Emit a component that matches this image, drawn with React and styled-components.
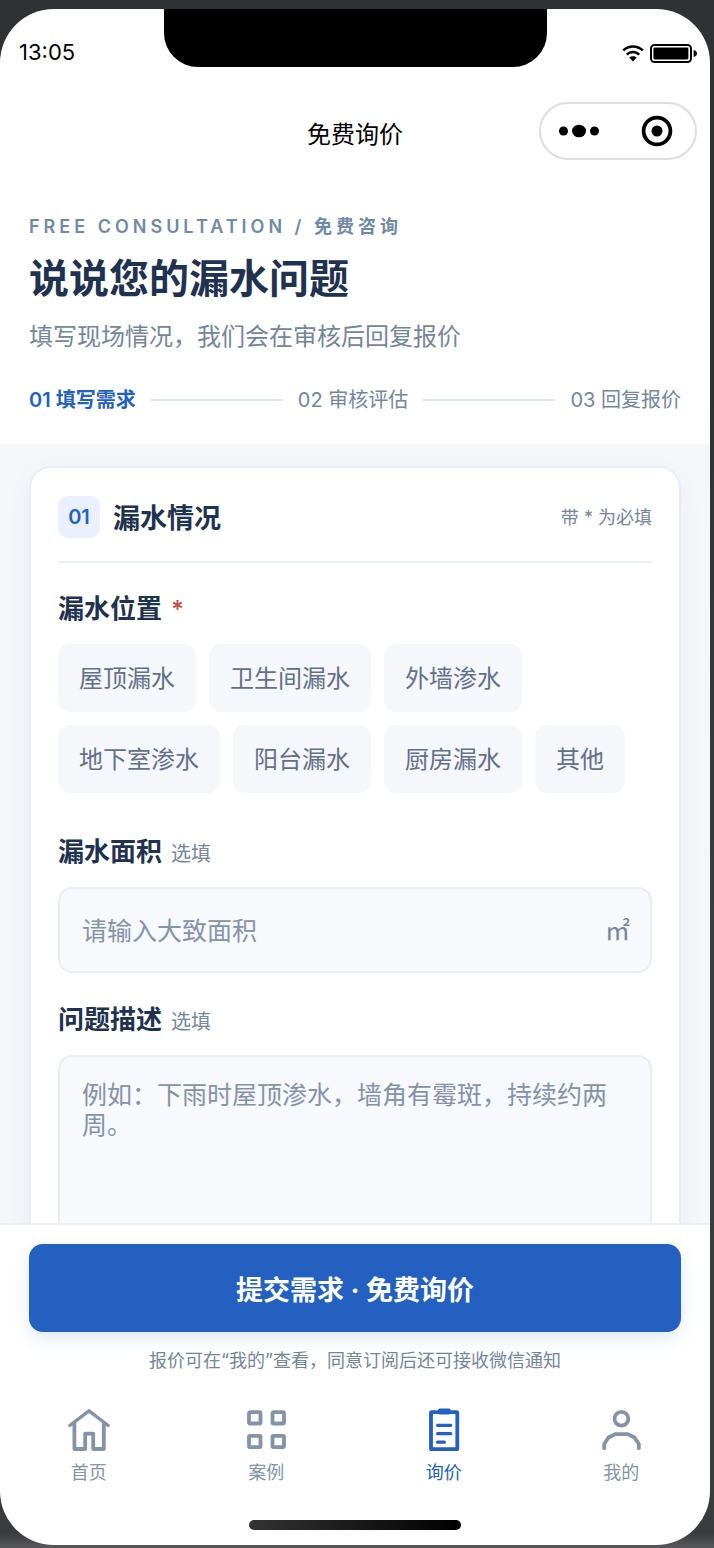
import React, { useState } from 'react'
import styled, { createGlobalStyle } from 'styled-components'

const GlobalStyle = createGlobalStyle`
  *, *::before, *::after {
    box-sizing: border-box;
  }

  body {
    margin: 0;
    background: #303133;
    font-family: Inter, "Noto Sans CJK SC", sans-serif;
    color: #1f324f;
  }

  button, input, textarea {
    font-family: inherit;
  }
`

const Desk = styled.div`
  display: flex;
  height: 100vh;
  padding: 9px 4px 3px 0;
  background: linear-gradient(#303133 0, #303133 20%, #3a3b3d 60%, #3a3b3d 99%, #58585a 100%);
`

const Phone = styled.div`
  flex: 1;
  min-width: 0;
  display: flex;
  flex-direction: column;
  overflow: hidden;
  border-radius: 54px;
  background: #fff;
`

const StatusBar = styled.div`
  flex: none;
  display: grid;
  grid-template-columns: 1fr 383px 1fr;
  height: 58px;
  color: #000;
`

const Clock = styled.time`
  padding: 29px 0 0 19px;
  font-size: 22px;
  line-height: 28px;
`

const Notch = styled.div`
  border-radius: 0 0 34px 34px;
  background: #000;
`

const StatusIcons = styled.div`
  display: flex;
  justify-content: flex-end;
  align-items: flex-start;
  gap: 6px;
  padding: 35px 12px 0 0;
`

const NavBar = styled.header`
  flex: none;
  display: grid;
  grid-template-columns: 1fr auto 1fr;
  align-items: center;
  height: 109px;
  padding: 0 13px;
  color: #000;
`

const NavTitle = styled.div`
  grid-column: 2;
  padding-top: 26px;
  font-size: 24px;
  line-height: 32px;
`

const Capsule = styled.div`
  justify-self: end;
  display: flex;
  width: 158px;
  height: 58px;
  margin-top: 19px;
  border: 2px solid #dedede;
  border-radius: 29px;
`

const CapsuleButton = styled.button`
  flex: 1;
  display: flex;
  align-items: center;
  justify-content: center;
  padding: 0;
  border: 0;
  background: none;
  color: #000;
  cursor: pointer;
`

const Hero = styled.section`
  flex: none;
  padding: 39px 29px 30px;
`

const Eyebrow = styled.div`
  font-size: 18px;
  line-height: 24px;
  font-weight: 600;
  letter-spacing: 4px;
  color: #7189a6;
`

const Heading = styled.h1`
  margin: 12px 0 14px;
  font-size: 40px;
  line-height: 56px;
  font-weight: 700;
`

const Lead = styled.p`
  margin: 0 0 33px;
  font-size: 24px;
  line-height: 32px;
  color: #75859b;
`

const Steps = styled.ol`
  display: flex;
  align-items: center;
  gap: 15px;
  margin: 0;
  padding: 0;
  list-style: none;
`

const Step = styled.li`
  display: contents;
  font-size: 20px;
  line-height: 28px;
  font-weight: ${props => props.$active ? '600' : '400'};
  color: ${props => props.$active ? '#2360bf' : '#75859b'};

  &:not(:first-child)::before {
    content: '';
    flex: 1;
    height: 2px;
    background: #dfe6f1;
  }
`

const FormArea = styled.main`
  flex: 1;
  min-height: 0;
  padding: 22px 29px;
  overflow-y: auto;
  scrollbar-width: none;
  background: #f4f6fa;
`

const Card = styled.form`
  padding: 28px 27px;
  border: 2px solid #e8edf5;
  border-radius: 22px;
  background: #fff;
  box-shadow: 0 8px 28px 0 rgba(31, 50, 79, 0.04);
`

const CardHead = styled.div`
  display: flex;
  align-items: center;
  padding-bottom: 23px;
  margin-bottom: 28px;
  border-bottom: 2px solid #ebf0f6;
`

const CardNumber = styled.span`
  width: 42px;
  margin-right: 13px;
  border-radius: 10px;
  background: #eaf0fd;
  font-size: 20px;
  line-height: 42px;
  font-weight: 600;
  text-align: center;
  color: #2360bf;
`

const CardTitle = styled.h2`
  flex: 1;
  margin: 0;
  padding-top: 4px;
  font-size: 27px;
  line-height: 36px;
  font-weight: 600;
`

const CardNote = styled.span`
  padding-top: 2px;
  font-size: 18px;
  line-height: 24px;
  color: #75859b;
`

const Field = styled.div`
  display: flex;
  flex-direction: column;
  gap: 17px;
  margin-bottom: ${props => props.$loose ? '41px' : '29px'};
`

const Label = styled.label`
  display: flex;
  align-items: baseline;
  gap: 9px;
  height: 36px;
  font-size: 26px;
  line-height: 36px;
  font-weight: 600;
`

const Required = styled.span`
  font-size: 24px;
  color: #c0504d;
`

const Optional = styled.span`
  font-size: 20px;
  font-weight: 400;
  color: #75859b;
`

const Chips = styled.div`
  display: flex;
  flex-wrap: wrap;
  gap: 13px;
`

const Chip = styled.button`
  height: 68px;
  padding: 2px 21px 0;
  border: 0;
  border-radius: 12px;
  background: ${props => props.$selected ? '#eaf0fd' : '#f5f7fb'};
  font-size: 24px;
  line-height: 32px;
  color: ${props => props.$selected ? '#2360bf' : '#627089'};
  cursor: pointer;
`

const InputBox = styled.div`
  display: flex;
  align-items: center;
  height: 86px;
  padding: 2px 20px 0 22px;
  border: 2px solid #e8edf5;
  border-radius: 14px;
  background: #f7f9fc;
`

const TextInput = styled.input`
  flex: 1;
  min-width: 0;
  padding: 0;
  border: 0;
  outline: 0;
  background: none;
  font-size: 25px;
  line-height: 30px;
  color: #1f324f;

  &::placeholder {
    color: #8493a8;
    opacity: 1;
  }
`

const Unit = styled.span`
  font-size: 25px;
  line-height: 30px;
  color: #75859b;
`

const TextArea = styled.textarea`
  display: block;
  width: 100%;
  height: 240px;
  padding: 23px 22px;
  border: 2px solid #e8edf5;
  border-radius: 14px;
  outline: 0;
  resize: none;
  overflow: hidden;
  background: #f7f9fc;
  font-size: 25px;
  line-height: 30px;
  color: #1f324f;

  &::placeholder {
    color: #8493a8;
    opacity: 1;
  }
`

const Footer = styled.footer`
  flex: none;
  display: flex;
  flex-direction: column;
  padding: 19px 0 15px;
  border-top: 2px solid #ebeef5;
`

const SubmitButton = styled.button`
  height: 88px;
  margin: 0 29px 17px;
  padding: 6px 0 0;
  border: 0;
  border-radius: 14px;
  background: #2360bf;
  box-shadow: 0 6px 18px 0 rgba(35, 96, 191, 0.14);
  font-size: 27px;
  line-height: 36px;
  font-weight: 700;
  color: #fff;
  cursor: pointer;
`

const Hint = styled.p`
  margin: 0 0 35px;
  font-size: 18px;
  line-height: 24px;
  text-align: center;
  color: #75859b;
`

const TabBar = styled.nav`
  display: grid;
  grid-template-columns: repeat(4, 1fr);
  margin-bottom: 35px;
`

const Tab = styled.a`
  display: flex;
  flex-direction: column;
  align-items: center;
  gap: 9px;
  font-size: 18px;
  line-height: 24px;
  text-decoration: none;
  color: ${props => props.$active ? '#2360bf' : '#8493a8'};
`

const HomeIndicator = styled.div`
  align-self: center;
  width: 212px;
  height: 10px;
  border-radius: 5px;
  background: linear-gradient(90deg, #333, #000);
`

const WifiIcon = () =>
  <svg width="22" height="18" viewBox="0 0 22 18" fill="none" stroke="#000" strokeWidth="2.6">
    <path d="M1.2 6.4C6.8 1.2 15.2 1.2 20.8 6.4" />
    <path d="M4.8 10.6c3.6-3.4 8.8-3.4 12.4 0" />
    <path d="M11 17.4l-3.8-3.8c2.2-1.8 5.4-1.8 7.6 0z" fill="#000" stroke="none" />
  </svg>

const BatteryIcon = () =>
  <svg width="48" height="19" viewBox="0 0 48 19">
    <rect x="1" y="1" width="40" height="17" rx="3.5" fill="none" stroke="#000" strokeWidth="2" />
    <rect x="3.4" y="3.6" width="35" height="11.8" rx="1.4" fill="#000" />
    <path d="M43.6 6c2 .4 3.4 1.7 3.4 3.500s-1.400 3.100-3.400 3.500z" fill="#000" />
  </svg>

const MoreIcon = () =>
  <svg width="44" height="16" viewBox="0 0 44 16" fill="currentColor">
    <circle cx="5.5" cy="8" r="4.5" />
    <ellipse cx="21" cy="8" rx="7" ry="6.3" />
    <circle cx="36.5" cy="8" r="4.5" />
  </svg>

const TargetIcon = () =>
  <svg width="32" height="32" viewBox="0 0 32 32">
    <circle cx="16" cy="16" r="13.4" fill="none" stroke="currentColor" strokeWidth="3.8" />
    <circle cx="16" cy="16" r="5.5" fill="currentColor" />
  </svg>

const TabIcon = ({ children }) =>
  <svg
    width="44"
    height="44"
    viewBox="0 0 44 44"
    fill="none"
    stroke="currentColor"
    strokeWidth="3.8"
    strokeLinecap="round"
    strokeLinejoin="round">
    {children}
  </svg>

const tabs = [
  {
    name: '首页',
    icon: <>
      <path d="M2.8 17.5L22 2.8L41.2 17.5" strokeWidth="3.4" />
      <path d="M7.4 15.5V41H18.2V25.6H26.2V41H36.8V15.5" />
    </>,
  },
  {
    name: '案例',
    icon: <>
      <rect x="5" y="4.2" width="11.5" height="11.3" rx="1" />
      <rect x="28.5" y="4.2" width="11.5" height="11.3" rx="1" />
      <rect x="5" y="27.8" width="11.5" height="11.3" rx="1" />
      <rect x="28.5" y="27.8" width="11.5" height="11.3" rx="1" />
    </>,
  },
  {
    name: '询价',
    icon: <>
      <rect x="9" y="4.2" width="26.3" height="37" rx="0.8" />
      <rect x="16" y="0.4" width="12.6" height="6.2" rx="1.8" fill="currentColor" stroke="none" />
      <path d="M15.6 17.3H28.8M15.6 25.7H28.8M15.6 34.2H22.4" strokeWidth="3.2" />
    </>,
  },
  {
    name: '我的',
    icon: <>
      <circle cx="22.4" cy="10.8" r="6.9" />
      <path d="M5.2 40.200V36L9.500 29.500L16 26.200H29L35.500 29.500L39.800 36V40.200" />
    </>,
  },
]

const steps = ['01 填写需求', '02 审核评估', '03 回复报价']

const places = ['屋顶漏水', '卫生间漏水', '外墙渗水', '地下室渗水', '阳台漏水', '厨房漏水', '其他']

const App = () => {
  const [place, setPlace] = useState(null)

  return (
    <Desk>
      <GlobalStyle />
      <Phone>
        <StatusBar>
          <Clock>13:05</Clock>
          <Notch />
          <StatusIcons>
            <WifiIcon />
            <BatteryIcon />
          </StatusIcons>
        </StatusBar>
        <NavBar>
          <NavTitle>免费询价</NavTitle>
          <Capsule>
            <CapsuleButton type="button" aria-label="更多"><MoreIcon /></CapsuleButton>
            <CapsuleButton type="button" aria-label="关闭"><TargetIcon /></CapsuleButton>
          </Capsule>
        </NavBar>
        <Hero>
          <Eyebrow>FREE CONSULTATION / 免费咨询</Eyebrow>
          <Heading>说说您的漏水问题</Heading>
          <Lead>填写现场情况，我们会在审核后回复报价</Lead>
          <Steps>
            {steps.map((step, index) => <Step key={ step } $active={ index === 0 }>{step}</Step>)}
          </Steps>
        </Hero>
        <FormArea>
          <Card id="inquiry" onSubmit={ event => event.preventDefault() }>
            <CardHead>
              <CardNumber>01</CardNumber>
              <CardTitle>漏水情况</CardTitle>
              <CardNote>带 * 为必填</CardNote>
            </CardHead>
            <Field $loose>
              <Label as="div" id="place-label">漏水位置<Required>*</Required></Label>
              <Chips role="group" aria-labelledby="place-label">
                {places.map(name =>
                  <Chip
                    key={ name }
                    type="button"
                    aria-pressed={ place === name }
                    $selected={ place === name }
                    onClick={ () => setPlace(name) }>
                    {name}
                  </Chip>
                )}
              </Chips>
            </Field>
            <Field>
              <Label htmlFor="area">漏水面积<Optional>选填</Optional></Label>
              <InputBox>
                <TextInput id="area" inputMode="decimal" placeholder="请输入大致面积" />
                <Unit>㎡</Unit>
              </InputBox>
            </Field>
            <Field>
              <Label htmlFor="description">问题描述<Optional>选填</Optional></Label>
              <TextArea id="description" placeholder="例如：下雨时屋顶渗水，墙角有霉斑，持续约两周。" />
            </Field>
          </Card>
        </FormArea>
        <Footer>
          <SubmitButton type="submit" form="inquiry">提交需求 · 免费询价</SubmitButton>
          <Hint>报价可在“我的”查看，同意订阅后还可接收微信通知</Hint>
          <TabBar>
            {tabs.map(({ name, icon }) =>
              <Tab key={ name } href="#" $active={ name === '询价' }>
                <TabIcon>{icon}</TabIcon>
                {name}
              </Tab>
            )}
          </TabBar>
          <HomeIndicator />
        </Footer>
      </Phone>
    </Desk>
  )
}

export default App
